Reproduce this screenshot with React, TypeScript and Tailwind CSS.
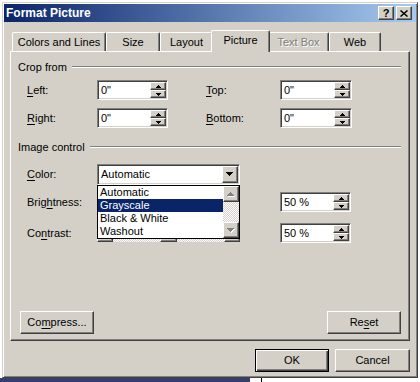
import React from "react";

const raised =
  "border border-t-white border-l-white border-b-[#404040] border-r-[#404040] shadow-[inset_-1px_-1px_#808080] bg-[#d4d0c8]";
const sunken =
  "border border-t-[#808080] border-l-[#808080] border-b-white border-r-white shadow-[inset_1px_1px_#404040,inset_-1px_-1px_#d4d0c8]";
const checker =
  "bg-[repeating-conic-gradient(#ffffff_0%_25%,#d4d0c8_0%_50%)] bg-[length:2px_2px]";

function TinyArrow({ up, color = "#000" }: { up?: boolean; color?: string }) {
  return (
    <svg width="5" height="3" viewBox="0 0 5 3" className="block">
      {up ? (
        <>
          <rect x="2" y="0" width="1" height="1" fill={color} />
          <rect x="1" y="1" width="3" height="1" fill={color} />
          <rect x="0" y="2" width="5" height="1" fill={color} />
        </>
      ) : (
        <>
          <rect x="0" y="0" width="5" height="1" fill={color} />
          <rect x="1" y="1" width="3" height="1" fill={color} />
          <rect x="2" y="2" width="1" height="1" fill={color} />
        </>
      )}
    </svg>
  );
}

function BigArrow({ dir, disabled }: { dir: "up" | "down" | "left" | "right"; disabled?: boolean }) {
  const rows = [7, 5, 3, 1];
  const main = disabled ? "#808080" : "#000";
  const shapes = (fill: string, dx: number, dy: number) =>
    rows.map((w, i) => {
      const off = (7 - w) / 2;
      if (dir === "down") return <rect key={i} x={off + dx} y={i + dy} width={w} height={1} fill={fill} />;
      if (dir === "up") return <rect key={i} x={off + dx} y={3 - i + dy} width={w} height={1} fill={fill} />;
      if (dir === "right") return <rect key={i} x={i + dx} y={off + dy} width={1} height={w} fill={fill} />;
      return <rect key={i} x={3 - i + dx} y={off + dy} width={1} height={w} fill={fill} />;
    });
  const horiz = dir === "up" || dir === "down";
  return (
    <svg width={horiz ? 8 : 5} height={horiz ? 5 : 8} viewBox={horiz ? "0 0 8 5" : "0 0 5 8"} className="block">
      {disabled && shapes("#ffffff", 1, 1)}
      {shapes(main, 0, 0)}
    </svg>
  );
}

function SpinBox({ value, w }: { value: string; w: string }) {
  return (
    <div className={`flex h-[20px] bg-white p-[1px] ${sunken} ${w}`}>
      <div className="flex-1 pl-[2px] leading-[16px] text-[11px]">{value}</div>
      <div className="flex flex-col w-[16px] h-[16px]">
        <div className={`h-[8px] flex items-center justify-center ${raised}`}>
          <TinyArrow up />
        </div>
        <div className={`h-[8px] flex items-center justify-center ${raised}`}>
          <TinyArrow />
        </div>
      </div>
    </div>
  );
}

function Label({ pre, u, post }: { pre: string; u: string; post: string }) {
  return (
    <span>
      {pre}
      <span className="underline underline-offset-[2px]">{u}</span>
      {post}
    </span>
  );
}

function GroupHeader({ title, className }: { title: string; className: string }) {
  return (
    <div className={`flex items-center h-[14px] pl-[7px] pr-[8px] ${className}`}>
      <span className="leading-[14px]">{title}</span>
      <div className="flex-1 ml-[5px] h-[2px] border-t border-t-[#808080] border-b border-b-white" />
    </div>
  );
}

function Slider() {
  return (
    <div className="flex w-[143px] h-[17px]">
      <div className={`w-[16px] flex items-center justify-center ${raised}`}>
        <BigArrow dir="left" />
      </div>
      <div className={`flex-1 flex justify-center ${checker}`}>
        <div className={`w-[17px] h-full ${raised}`} />
      </div>
      <div className={`w-[16px] flex items-center justify-center ${raised}`}>
        <BigArrow dir="right" />
      </div>
    </div>
  );
}

function Tab({
  label,
  w,
  selected,
  disabled,
}: {
  label: string;
  w: string;
  selected?: boolean;
  disabled?: boolean;
}) {
  if (selected) {
    return (
      <div
        className={`relative z-10 -mx-[2px] -mb-[1px] h-[22px] ${w} bg-[#d4d0c8] rounded-t-[2px] border-t border-l border-r border-t-white border-l-white border-r-[#404040] shadow-[inset_-1px_0_#808080] flex items-center justify-center pb-[2px]`}
      >
        {label}
      </div>
    );
  }
  return (
    <div
      className={`h-[19px] ${w} bg-[#d4d0c8] rounded-t-[2px] border-t border-l border-r border-t-white border-l-white border-r-[#404040] shadow-[inset_-1px_0_#808080] flex items-center justify-center pt-[1px] ${
        disabled ? "text-[#808080] [text-shadow:1px_1px_#ffffff]" : ""
      }`}
    >
      {label}
    </div>
  );
}

function Btn({ children, w, def }: { children: React.ReactNode; w: string; def?: boolean }) {
  if (def) {
    return (
      <div
        className={`h-[23px] ${w} bg-[#d4d0c8] border border-black shadow-[inset_1px_1px_#ffffff,inset_-1px_-1px_#404040,inset_-2px_-2px_#808080] flex items-center justify-center`}
      >
        {children}
      </div>
    );
  }
  return <div className={`h-[23px] ${w} ${raised} flex items-center justify-center`}>{children}</div>;
}

export default function App() {
  return (
    <div className="w-[420px] h-[382px] bg-white flex flex-col overflow-hidden text-[11px] leading-[13px] text-black font-['Liberation_Sans',Arial,sans-serif]">
      <div className="ml-[2px] mt-[2px] w-[416px] h-[376px] shrink-0 border border-t-[#d4d0c8] border-l-[#d4d0c8] border-b-[#404040] border-r-[#404040] bg-[#d4d0c8] shadow-[inset_1px_1px_#ffffff,inset_-1px_-1px_#808080] p-[1px] flex flex-col">
        {/* Title bar */}
        <div className="h-[18px] flex items-center bg-[linear-gradient(to_right,#0a246a,#a6caf0)] pl-[2px] pr-[4px]">
          <span className="flex-1 text-white font-bold text-[12px] leading-none">Format Picture</span>
          <div className={`w-[16px] h-[14px] flex items-center justify-center font-bold text-[11px] leading-none ${raised}`}>
            ?
          </div>
          <div className={`ml-[2px] w-[16px] h-[14px] flex items-center justify-center ${raised}`}>
            <svg width="8" height="7" viewBox="0 0 8 7" className="block">
              <path d="M0.5 0.5L7.5 6.5M7.5 0.5L0.5 6.5" stroke="#000" strokeWidth="1.5" />
            </svg>
          </div>
        </div>

        {/* Tabs */}
        <div className="mt-[8px] ml-[8px] h-[21px] flex items-end">
          <Tab label="Colors and Lines" w="w-[94px]" />
          <Tab label="Size" w="w-[54px]" />
          <Tab label="Layout" w="w-[53px]" />
          <Tab label="Picture" w="w-[59px]" selected />
          <Tab label="Text Box" w="w-[61px]" disabled />
          <Tab label="Web" w="w-[52px]" />
        </div>

        {/* Panel */}
        <div className="ml-[6px] w-[400px] h-[290px] border border-t-white border-l-white border-b-[#404040] border-r-[#404040] shadow-[inset_-1px_-1px_#808080] flex flex-col">
          <GroupHeader title="Crop from" className="mt-[8px]" />
          <div className="flex items-center h-[20px] mt-[6px] pl-[16px]">
            <div className="w-[70px]">
              <Label pre="" u="L" post="eft:" />
            </div>
            <SpinBox value={'0"'} w="w-[71px]" />
            <div className="ml-[38px] w-[74px]">
              <Label pre="" u="T" post="op:" />
            </div>
            <SpinBox value={'0"'} w="w-[72px]" />
          </div>
          <div className="flex items-center h-[20px] mt-[8px] pl-[16px]">
            <div className="w-[70px]">
              <Label pre="" u="R" post="ight:" />
            </div>
            <SpinBox value={'0"'} w="w-[71px]" />
            <div className="ml-[38px] w-[74px]">
              <Label pre="" u="B" post="ottom:" />
            </div>
            <SpinBox value={'0"'} w="w-[72px]" />
          </div>

          <GroupHeader title="Image control" className="mt-[12px]" />

          <div className="flex items-center h-[21px] mt-[10px] pl-[16px]">
            <div className="w-[70px]">
              <Label pre="" u="C" post="olor:" />
            </div>
            <div className="relative">
              <div className={`flex w-[143px] h-[21px] bg-white p-[1px] ${sunken}`}>
                <div className="flex-1 pl-[2px] leading-[17px]">Automatic</div>
                <div className={`w-[16px] h-[17px] flex items-center justify-center ${raised}`}>
                  <BigArrow dir="down" />
                </div>
              </div>
              {/* Dropdown list */}
              <div className="absolute left-0 top-[21px] z-20 w-[143px] h-[54px] border border-black bg-white flex">
                <div className="flex-1 flex flex-col">
                  <div className="h-[13px] pl-[2px] leading-[13px]">Automatic</div>
                  <div className="h-[13px] pl-[2px] leading-[13px] bg-[#0a246a] text-white">Grayscale</div>
                  <div className="h-[13px] pl-[2px] leading-[13px]">Black &amp; White</div>
                  <div className="h-[13px] pl-[2px] leading-[13px]">Washout</div>
                </div>
                <div className="w-[16px] flex flex-col">
                  <div className={`h-[16px] flex items-center justify-center ${raised}`}>
                    <BigArrow dir="up" disabled />
                  </div>
                  <div className={`flex-1 ${checker}`} />
                  <div className={`h-[16px] flex items-center justify-center ${raised}`}>
                    <BigArrow dir="down" disabled />
                  </div>
                </div>
              </div>
            </div>
          </div>

          <div className="flex items-center h-[20px] mt-[7px] pl-[16px]">
            <div className="w-[70px]">
              <Label pre="Brig" u="h" post="tness:" />
            </div>
            <Slider />
            <div className="ml-[40px]">
              <SpinBox value="50 %" w="w-[71px]" />
            </div>
          </div>
          <div className="flex items-center h-[20px] mt-[11px] pl-[16px]">
            <div className="w-[70px]">
              <Label pre="Co" u="n" post="trast:" />
            </div>
            <Slider />
            <div className="ml-[40px]">
              <SpinBox value="50 %" w="w-[71px]" />
            </div>
          </div>

          <div className="flex-1" />
          <div className="flex justify-between pl-[9px] pr-[8px] mb-[6px]">
            <Btn w="w-[74px]">
              <Label pre="Co" u="m" post="press..." />
            </Btn>
            <Btn w="w-[74px]">
              <Label pre="Re" u="s" post="et" />
            </Btn>
          </div>
        </div>

        {/* OK / Cancel */}
        <div className="mt-[8px] flex justify-end gap-[6px] mr-[6px]">
          <Btn w="w-[74px]" def>
            OK
          </Btn>
          <Btn w="w-[75px]">Cancel</Btn>
        </div>
      </div>
      {/* Desktop strip below the window */}
      <div className="flex h-[4px] shrink-0">
        <div className="w-[250px] bg-[#34406a]" />
        <div className="w-[11px] bg-white" />
        <div className="w-[1px] bg-black" />
        <div className="flex-1 bg-white" />
      </div>
    </div>
  );
}
